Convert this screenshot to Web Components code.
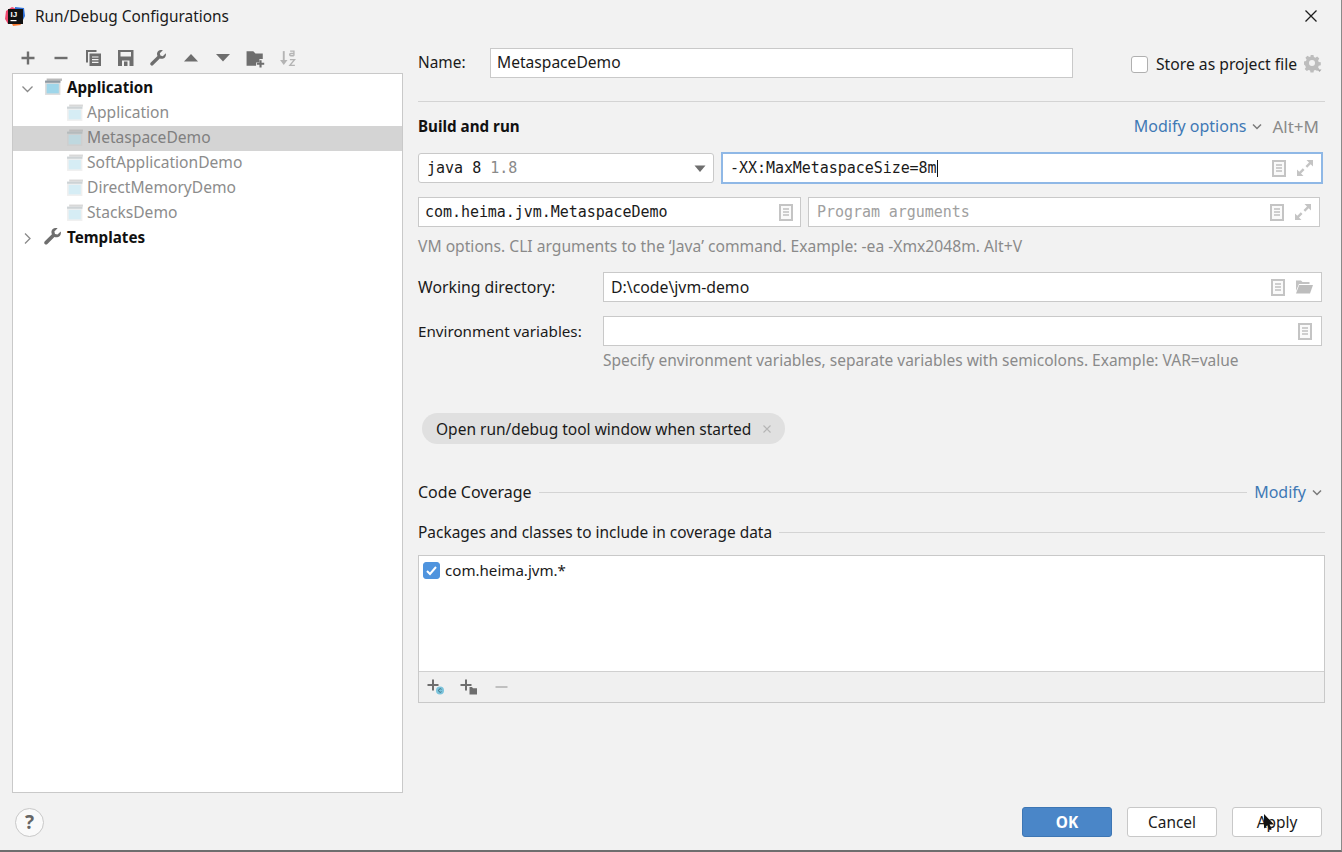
<!DOCTYPE html>
<html lang="en"><head><meta charset="utf-8"><title>Run/Debug Configurations</title>
<style>
html,body{margin:0;padding:0;background:#f2f2f2}
body{font:15px "Noto Sans",sans-serif;color:#1a1a1a;width:1342px;height:852px;overflow:hidden}
</style></head><body>
<x-dialog></x-dialog>
<script>
const ICONS={
 plus:'<path d="M9 2.500v13M2.500 9h13" stroke="#6e6e6e" stroke-width="2.400" fill="none"/>',
 minus:'<path d="M2.500 9h13" stroke="#6e6e6e" stroke-width="2.400" fill="none"/>',
 copy:'<path d="M1 1h10.500v2H3v10.500H1z" fill="#6e6e6e"/><path d="M4.500 4.500H16V17H4.500z" fill="#6e6e6e"/><path d="M7 8h6.500M7 10.700h6.500M7 13.400h6.500" stroke="#f2f2f2" stroke-width="1.200"/>',
 save:'<path d="M1 1h15.500v16H1z" fill="#6e6e6e"/><path d="M3.500 3h10.500v4.500H3.500z" fill="#f2f2f2"/><path d="M5 11.500h7.500V17H5z" fill="#f2f2f2"/><path d="M7 12.500h3.500V17H7z" fill="#6e6e6e"/>',
 wrench:'<path d="M15.800 3.200l-3 3-2.400-.6-.6-2.400 3-3c-2.300-.7-4.700.2-5.500 2.200-.5 1.300-.3 2.500.2 3.500L.8 12.600c-.8.8-.8 1.800-.1 2.500s1.800.7 2.500 0l6.600-6.700c1 .5 2.300.6 3.500.2 2-.8 3.100-3.100 2.500-5.400z" fill="#6e6e6e"/>',
 up:'<path d="M2 12.500L9 5l7 7.500z" fill="#6e6e6e"/>',
 down:'<path d="M2 5l7 7.500L16 5z" fill="#6e6e6e"/>',
 seldown:'<path d="M1.500 4.500L7 11l5.500-6.500z" fill="#6e6e6e"/>',
 folderplus:'<path d="M.5 2h6l2 2h6.500v5h-3v3h-3v3H.5z" fill="#6e6e6e"/><path d="M13 10v6.500M9.700 13.200h6.600" stroke="#6e6e6e" stroke-width="1.900" fill="none"/>',
 sort:'<path d="M4.500 2v11" stroke="#b4b4b4" stroke-width="1.800"/><path d="M1 10.500l3.500 4.500 3.500-4.500z" fill="#b4b4b4"/><path d="M10.500 2h3.600v4.400M14 4.200h-2.800a1.100 1.100 0 0 0 0 2.200h2.800M10.300 10h4.400l-4.400 5.500h4.700" stroke="#b4b4b4" stroke-width="1.300" fill="none"/>',
 doc:'<path d="M1 1h12v15H1z" fill="#fafafa" stroke="#c4c4c4" stroke-width="2"/><path d="M4 5h6M4 8h6M4 11h6" stroke="#c0c0c0" stroke-width="1.300"/>',
 expand:'<path d="M10.500 1H17v6.500l-2.300-2.300-3.500 3.500-1.700-1.700 3.500-3.500z" fill="#c4c4c4"/><path d="M7.500 17H1v-6.500l2.300 2.300 3.500-3.500 1.700 1.700-3.500 3.500z" fill="#c4c4c4"/>',
 folderopen:'<path d="M1 2.500h5l1.500 1.500h7v2H4L1 13z" fill="#c2c2c2"/><path d="M4.200 7H18l-3 8.500H1z" fill="#bdbdbd"/>',
 gear:'<path fill-rule="evenodd" d="M6.500 0h3l.4 2.100 1.500.6 1.800-1.200 2.100 2.100-1.200 1.800.6 1.500 2.100.4v3l-2.100.4-.6 1.500 1.200 1.800-2.100 2.100-1.800-1.200-1.500.6-.4 2.100h-3l-.4-2.100-1.500-.6-1.800 1.200-2.100-2.100 1.200-1.800-.6-1.500L-.1 9.500v-3l2.100-.4.6-1.500L1.400 2.800l2.100-2.100 1.800 1.200 1.500-.6zM8 5a3 3 0 1 0 0 6 3 3 0 0 0 0-6z" fill="#bdbdbd"/><path d="M13.500 14.500h4L15.500 17z" fill="#a8a8a8"/>',
 chev:'<path d="M2 4.500l4 4 4-4" stroke="#7a7a7a" stroke-width="1.500" fill="none"/>',
 treedown:'<path d="M2.500 5.500L7.500 10.500l5-5" stroke="#8a8a8a" stroke-width="1.300" fill="none"/>',
 treeright:'<path d="M5 2.500l5 5-5 5" stroke="#8a8a8a" stroke-width="1.300" fill="none"/>',
 app:'<path d="M1 2.500h14.500V16H1z" fill="#dcdcdc"/><path d="M2.500 0.500h14.500v2.200H2.500z" fill="#a9a9a9" opacity=".8"/><path d="M1 2.500h14.500v2H1z" fill="#8f9aa3"/><path d="M2.500 5.500h11.500v9H2.500z" fill="#9fd6ea"/>',
 appdim:'<path d="M1 2.500h14.500V16H1z" fill="#f0f0f0"/><path d="M3 .5h13v2H3z" fill="#d8d8d8"/><path d="M1 2.500h14.500v2H1z" fill="#cdd3d6"/><path d="M2.500 5.500h11.500v9H2.500z" fill="#d6edf5"/>',
 appsel:'<path d="M1 2.500h14.500V16H1z" fill="#cfcfcf"/><path d="M3 .5h13v2H3z" fill="#bdbdbd"/><path d="M1 2.500h14.500v2H1z" fill="#b5bbbd"/><path d="M2.500 5.500h11.500v9H2.500z" fill="#bfd8df"/>',
 twrench:'<path d="M15.800 3.200l-3 3-2.400-.6-.6-2.400 3-3c-2.300-.7-4.700.2-5.500 2.200-.5 1.300-.3 2.500.2 3.500L.8 12.600c-.8.8-.8 1.800-.1 2.500s1.800.7 2.500 0l6.600-6.700c1 .5 2.300.6 3.500.2 2-.8 3.100-3.100 2.500-5.400z" fill="#6e6e6e"/>',
 addclass:'<path d="M7 1.500v11M1.500 7h11" stroke="#6e6e6e" stroke-width="2" fill="none"/><circle cx="14" cy="12.500" r="4" fill="#7cc4dc"/><path d="M15.500 11.300a1.700 1.700 0 1 0 0 2.400" stroke="#3b6e80" stroke-width="1" fill="none"/>',
 addpkg:'<path d="M7 1.500v11M1.500 7h11" stroke="#6e6e6e" stroke-width="2" fill="none"/><path d="M10.500 9h2.500l1 1.200h4v6.300h-7.500z" fill="#6e6e6e"/>',
 rm:'<path d="M1.500 7h12" stroke="#c0c0c0" stroke-width="2" fill="none"/>',
 close:'<path d="M1.500 1.500l11 11M12.500 1.500l-11 11" stroke="#1e1e1e" stroke-width="1.300" fill="none"/>',
 chipx:'<path d="M1.500 1.500l7 7M8.500 1.500l-7 7" stroke="#b5b5b5" stroke-width="1.100" fill="none"/>',
 cursor:'<path d="M1 0v14.500l3.300-3.200 2.300 5 2.200-1-2.300-4.800H11z" fill="#111"/>'
};
const VB={plus:'0 0 18 18',minus:'0 0 18 18',up:'0 0 18 18',down:'0 0 18 18',seldown:'0 0 14 14',copy:'0 0 17 18',save:'0 0 17 18',wrench:'0 0 17 17',twrench:'0 0 17 17',folderplus:'0 0 17 17',sort:'0 0 17 17',expand:'0 0 18 18',folderopen:'0 0 19 18',gear:'0 0 18 18',chev:'0 0 12 12',treedown:'0 0 15 15',treeright:'0 0 15 15',app:'0 0 17 17',appdim:'0 0 17 17',appsel:'0 0 17 17',addclass:'0 0 19 18',addpkg:'0 0 19 18',rm:'0 0 15 14',close:'0 0 14 14',chipx:'0 0 10 10',cursor:'0 0 12 18',doc:'0 0 14 17'};
function def(name,css,html){
 customElements.define(name,class extends HTMLElement{
  constructor(){super();this.attachShadow({mode:'open'});}
  connectedCallback(){
   const g=a=>this.getAttribute(a);
   this.shadowRoot.innerHTML='<style>'+css+'</style>'+(typeof html==='function'?html(g):html);
  }
 });
}
def('x-icon',':host{display:inline-flex;flex:none}svg{display:block}',g=>{
 const n=g('name'),s=+g('size')||16;const vb=VB[n]||'0 0 16 16';
 return `<svg xmlns="http://www.w3.org/2000/svg" width="${s}" height="${g('h')||s}" viewBox="${vb}">${ICONS[n]||''}</svg>`;
});
def('x-logo',':host{display:block;width:21px;height:21px;flex:none}svg{display:block}text{font:700 8px "Liberation Sans",sans-serif;fill:#fff}',
 `<svg width="21" height="21" viewBox="0 0 21 21"><path d="M1 5l6-4 5 2-3 9-6 6-3-5z" fill="#f0486e"/><path d="M10 1l9 1 1 8-4 8-6 1z" fill="#2c6fd8"/><path d="M3 8l5 12 8-1-7-10z" fill="#f97a2f"/><rect x="3" y="3" width="15" height="15" fill="#111"/><text x="5.500" y="10.500">IJ</text><rect x="5.500" y="14" width="6" height="1.200" fill="#fff"/></svg>`);
def('x-titlebar',':host{display:flex;align-items:center;height:32px;padding-left:5px;padding-right:23px;gap:9px;font-size:15.4px;color:#1a1a1a}.t{flex:1}',
 `<x-logo></x-logo><span class="t"><slot></slot></span><x-icon name="close" size="14"></x-icon>`);
def('x-toolbar',':host{display:flex;align-items:center;height:28px;margin:12px 0 1px}','<slot></slot>');
def('x-tool',':host{display:flex;justify-content:center;width:32.500px;flex:none}',g=>`<x-icon name="${g('name')}" size="${g('size')||17}" h="${g('h')||g('size')||17}"></x-icon>`);
def('x-tree',':host{display:block;background:#fff;border:1px solid #c9c9c9;height:720px;padding-top:2px;box-sizing:border-box}','<slot></slot>');
def('x-tree-row',`:host{display:flex;align-items:center;height:25px;font-size:15.6px;color:#8c8c8c;box-sizing:border-box}
 :host([selected]){background:#d4d4d4;color:#808080}
 :host([top]){color:#111;font-weight:700;font-size:15.2px}
 .arrow{width:15px;margin:0 9px 0 7px;display:flex}
 .ic{margin-right:5px;display:flex}
 .tx{position:relative;top:-2px}
 :host([top]) .ic{position:relative;top:-2px}
 :host([child]){padding-left:53px}
 :host([child]) .ic{margin-right:3px;position:relative;top:-1px}`,
 g=>`${g('arrow')?`<span class="arrow"><x-icon name="${g('arrow')}" size="15"></x-icon></span>`:''}<span class="ic"><x-icon name="${g('icon')}" size="18"></x-icon></span><span class="tx"><slot></slot></span>`);
def('x-sidebar',':host{display:block;width:391px;margin-left:12px;flex:none}','<slot></slot>');
def('x-field',`:host{display:flex;align-items:center;height:30px;box-sizing:border-box;background:#fff;border:1px solid #c9c9c9;padding:0 7px 0 7px;font-size:15.6px;color:#1a1a1a;min-width:0}
 :host([mono]){font-family:"DejaVu Sans Mono",monospace;font-size:15px;letter-spacing:-.05px}
 :host([focus]){border:2px solid #8fb8e6;height:32px;margin-top:-1px}
 :host([ph]){color:#a0a0a0}
 .t{flex:1;white-space:pre;overflow:hidden;display:flex;align-items:center}
 .c{display:inline-block;width:1.500px;height:17px;background:#111}`,
 g=>`<span class="t"><slot></slot>${g('focus')!==null?'<span class="c"></span>':''}</span>${(g('icons')||'').split(' ').filter(Boolean).map((n,i)=>`<x-icon name="${n}" ${n==='doc'?'size="14" h="17"':n==='folderopen'?'size="19" h="18"':'size="18"'} style="margin-left:${i?'10px':'0'}"></x-icon>`).join('')}`);
def('x-select',`:host{display:flex;align-items:center;height:30px;box-sizing:border-box;background:#fff;border:1px solid #c9c9c9;border-radius:3px;padding:0 6px 0 8px;font:15px "DejaVu Sans Mono",monospace;color:#1a1a1a}
 .t{flex:1}`,`<span class="t"><slot></slot></span><x-icon name="seldown" size="14"></x-icon>`);
def('x-label',':host{display:block;color:#1a1a1a;font-size:15.4px;white-space:nowrap}','<slot></slot>');
def('x-hint',':host{display:block;color:#8a8a8a;font-size:15.65px;white-space:nowrap}','<slot></slot>');
def('x-hr',':host{display:block;height:1px;background:#d4d4d4}','');
def('x-checkbox',':host{display:inline-flex;width:17px;height:17px;box-sizing:border-box;border:1px solid #b0b0b0;border-radius:3px;background:#fff;flex:none}:host([checked]){background:#4f94de;border-color:#4f94de}svg{display:block}',
 g=>g('checked')!==null?'<svg width="15" height="15" viewBox="0 0 15 15"><path d="M3 8l3 3 6-7" stroke="#fff" stroke-width="2" fill="none"/></svg>':'');
def('x-chip',':host{display:inline-flex;align-items:center;height:31px;padding:0 13px 0 14px;background:#e0e0e0;border-radius:16px;font-size:15.5px;color:#1a1a1a;gap:11px}','<slot></slot><x-icon name="chipx" size="10"></x-icon>');
def('x-link',':host{display:inline-flex;align-items:center;color:#3f79b5;font-size:16px;gap:5px;white-space:nowrap;font-weight:400}','<slot></slot><x-icon name="chev" size="12"></x-icon>');
def('x-group-title',':host{display:flex;align-items:center;font-size:15.45px;color:#1a1a1a;gap:7px;white-space:nowrap}.l{flex:1;height:1px;background:#d4d4d4}','<span><slot></slot></span><span class="l"></span><slot name="end"></slot>');
def('x-list',':host{display:flex;flex-direction:column;height:148px;box-sizing:border-box;border:1px solid #c9c9c9;background:#fff}.b{flex:1;padding:5px 0 0 4px;display:block}.f{height:31px;box-sizing:border-box;border-top:1px solid #d0d0d0;background:#f0f0f0;display:flex;align-items:center;padding-left:7px;gap:14px}.rm{margin-left:2px}',
 '<div class="b"><slot></slot></div><div class="f"><x-icon name="addclass" size="19" h="18"></x-icon><x-icon name="addpkg" size="19" h="18"></x-icon><x-icon class="rm" name="rm" size="15" h="14"></x-icon></div>');
def('x-btn',':host{display:flex;align-items:center;justify-content:center;width:90px;height:30px;box-sizing:border-box;background:#fff;border:1px solid #c8c8c8;border-radius:3px;font-size:15.4px;color:#1a1a1a}:host([primary]){background:#4a86c8;border-color:#3d76b4;color:#fff;font-weight:700}','<slot></slot>');
def('x-help',':host{display:flex;align-items:center;justify-content:center;width:29px;height:29px;box-sizing:border-box;border:1px solid #c8c8c8;border-radius:50%;background:#fafafa;color:#666;font:700 19px "Noto Sans",sans-serif}','?');
def('x-content',`:host{display:block;width:907px;margin-left:15px;padding-top:16px;flex:none}
 .r{display:flex;align-items:center}
 .name{height:30px}.name x-label{width:71px;margin-top:-2px}.name x-field{width:583px;padding-left:6px;padding-bottom:2px;margin-left:1px}
 .store{margin-left:58px;display:flex;align-items:center;gap:8px;font-size:15.7px;padding-top:2px}
 .store x-icon{margin-left:-1px;margin-top:-1px}
 x-hr{margin-top:23px}
 .bh{margin-top:13px;height:22px;font-weight:700;justify-content:space-between;padding-right:6px;font-size:15.2px}
 .bh b{font-weight:700;color:#111}
 .mod{display:flex;align-items:center;gap:9px;font-weight:400}
 .alt{color:#8a8a8a;font-size:17px}
 .g2{display:grid;grid-template-columns:296px 602px;gap:7px;margin-top:16px}
 .g3{display:grid;grid-template-columns:383px 512px;gap:7px;margin-top:13px}
 .hint1{margin-top:8px;height:20px}
 .wd{margin-top:17px;display:grid;grid-template-columns:185px 719px;align-items:center}
 .wd x-label{font-size:15.8px}
 .wd x-field{font-size:15.8px}
 .env{margin-top:14px}
 .env x-label{font-size:15.2px}
 .hint2{margin:3px 0 0 185px;font-size:15.5px}
 .chip{margin:42px 0 0 4px}
 .cc{margin-top:37px;padding-right:2px;font-size:16px}
 .pk{margin-top:18px}
 x-list{margin-top:12px}
 .item{display:flex;align-items:center;gap:5px;color:#1a1a1a;font-size:15.1px;margin-top:-1px}
 .gray{color:#8a8a8a}`,
 `<div class="r name"><x-label>Name:</x-label><x-field>MetaspaceDemo</x-field>
   <div class="store"><x-checkbox></x-checkbox><span>Store as project file</span><x-icon name="gear" size="18"></x-icon></div></div>
  <x-hr></x-hr>
  <div class="r bh"><b>Build and run</b><span class="mod"><x-link>Modify options</x-link><span class="alt">Alt+M</span></span></div>
  <div class="g2"><x-select>java 8 <span class="gray">1.8</span></x-select><x-field mono focus icons="doc expand">-XX:MaxMetaspaceSize=8m</x-field></div>
  <div class="g3"><x-field mono icons="doc" style="padding-left:6px">com.heima.jvm.MetaspaceDemo</x-field><x-field mono ph icons="doc expand" style="padding-left:8px">Program arguments</x-field></div>
  <x-hint class="hint1">VM options. CLI arguments to the ‘Java’ command. Example: -ea -Xmx2048m. Alt+V</x-hint>
  <div class="wd"><x-label>Working directory:</x-label><x-field icons="doc folderopen">D:\\code\\jvm-demo</x-field></div>
  <div class="wd env"><x-label>Environment variables:</x-label><x-field icons="doc" style="padding-right:9px"></x-field></div>
  <x-hint class="hint2">Specify environment variables, separate variables with semicolons. Example: VAR=value</x-hint>
  <div class="chip"><x-chip>Open run/debug tool window when started</x-chip></div>
  <x-group-title class="cc">Code Coverage<x-link slot="end">Modify</x-link></x-group-title>
  <x-group-title class="pk">Packages and classes to include in coverage data</x-group-title>
  <x-list><div class="item"><x-checkbox checked></x-checkbox><span>com.heima.jvm.*</span></div></x-list>`);
def('x-footer',':host{display:flex;align-items:center;height:30px;margin-top:14px;padding:0 19px 0 15px;gap:15px}.sp{flex:1}','<x-help></x-help><span class="sp"></span><x-btn primary>OK</x-btn><x-btn>Cancel</x-btn><x-btn>Apply</x-btn>');
def('x-dialog',`:host{display:block;position:relative;width:1342px;height:852px;box-sizing:border-box;background:#f2f2f2;border-bottom:2px solid #6e6e6e;border-right:1px solid #8a8a8a}
 .main{display:flex;height:761px}
 .cur{position:absolute;left:1263px;top:814px}`,
 `<x-titlebar>Run/Debug Configurations</x-titlebar>
 <div class="main">
  <x-sidebar>
   <x-toolbar>
    <x-tool name="plus" size="18"></x-tool><x-tool name="minus" size="18"></x-tool><x-tool name="copy" size="17" h="18"></x-tool><x-tool name="save" size="17" h="18"></x-tool><x-tool name="wrench" size="17"></x-tool><x-tool name="up" size="18"></x-tool><x-tool name="down" size="18"></x-tool><x-tool name="folderplus" size="19"></x-tool><x-tool name="sort" size="18"></x-tool>
   </x-toolbar>
   <x-tree>
    <x-tree-row top arrow="treedown" icon="app">Application</x-tree-row>
    <x-tree-row child icon="appdim">Application</x-tree-row>
    <x-tree-row child selected icon="appsel">MetaspaceDemo</x-tree-row>
    <x-tree-row child icon="appdim">SoftApplicationDemo</x-tree-row>
    <x-tree-row child icon="appdim">DirectMemoryDemo</x-tree-row>
    <x-tree-row child icon="appdim">StacksDemo</x-tree-row>
    <x-tree-row top arrow="treeright" icon="twrench">Templates</x-tree-row>
   </x-tree>
  </x-sidebar>
  <x-content></x-content>
 </div>
 <x-footer></x-footer>
 <x-icon class="cur" name="cursor" size="12" h="18"></x-icon>`);
</script>
</body></html>
